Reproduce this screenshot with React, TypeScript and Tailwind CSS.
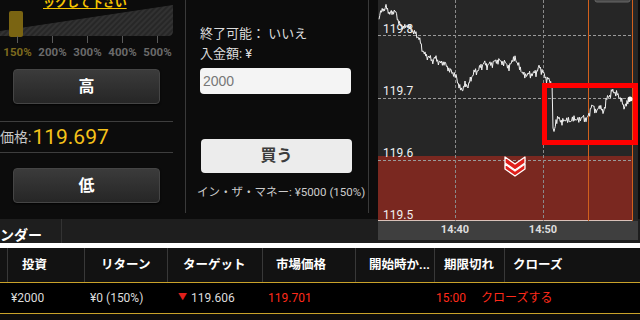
const keys: [number, number][] = [
  [379, 16], [383, 9], [386, 7], [389, 12], [392, 13], [395, 10], [398, 20], [401, 26], [404, 27],
  [408, 25], [412, 30], [416, 34], [419, 38], [422, 48], [425, 55], [428, 56], [432, 60], [436, 58],
  [440, 63], [444, 62], [448, 68], [452, 72], [456, 76], [459, 86], [462, 90], [465, 84], [468, 86],
  [471, 78], [474, 72], [478, 70], [481, 66], [484, 63], [487, 65], [490, 64], [494, 62], [498, 60],
  [502, 62], [506, 63], [509, 68], [512, 60], [515, 58], [518, 64], [521, 70], [524, 75], [528, 74],
  [532, 74], [536, 72], [539, 67], [542, 70], [545, 77], [548, 79], [550, 81], [552, 83], [553, 128],
  [554, 133], [556, 120], [559, 118], [562, 122], [566, 119], [570, 121], [574, 118], [578, 120],
  [582, 117], [586, 119], [589, 115], [591, 106], [594, 107], [597, 112], [600, 104], [603, 114],
  [606, 100], [609, 96], [612, 91], [615, 92], [618, 95], [621, 99], [624, 107], [627, 103], [630, 99],
];

// jagged tick line: interpolate the key points and shake them a little
function pricePath() {
  const pts: string[] = [];
  let i = 0;
  for (let k = 0; k < keys.length - 1; k++) {
    const [x0, y0] = keys[k];
    const [x1, y1] = keys[k + 1];
    const drop = Math.abs(y1 - y0) > 20;
    const steps = drop ? 1 : Math.max(1, Math.round((x1 - x0) / 0.8));
    for (let s = 0; s < steps; s++) {
      const t = s / steps;
      const x = x0 + (x1 - x0) * t;
      const base = y0 + (y1 - y0) * t;
      const n = drop ? 0 : Math.sin(i * 2.7) * 1.8 + Math.sin(i * 5.3 + 1) * 1.3 + (i % 7 === 0 ? 2.2 : 0);
      pts.push(`${(x - 378).toFixed(1)},${(base + n).toFixed(1)}`);
      i++;
    }
  }
  pts.push(`${630 - 378},99`);
  return "M" + pts.join(" L");
}

function Ramp() {
  const ticks = [17, 52, 87, 122, 157];
  return (
    <svg width="176" height="44" className="block">
      <defs>
        <pattern id="hatch" width="4" height="4" patternUnits="userSpaceOnUse" patternTransform="rotate(45)">
          <rect width="4" height="4" fill="#272727" />
          <rect width="2" height="4" fill="#323232" />
        </pattern>
      </defs>
      <path d="M0 31 L173 5 L173 31 Q173 36 168 36 L0 36 Z" fill="url(#hatch)" />
      <rect x="9" y="11" width="14" height="26" rx="2" fill="#7a6412" />
      {ticks.map((x) => (
        <line key={x} x1={x + 0.5} x2={x + 0.5} y1="36" y2="43" stroke="#5a5a5a" />
      ))}
    </svg>
  );
}

function DarkButton({ label }: { label: string }) {
  return (
    <div className="ml-[13px] w-[147px] h-[35px] rounded-[4px] border border-[#454545] bg-gradient-to-b from-[#3b3b3b] to-[#262626] flex items-center justify-center text-[16px] font-bold text-white shadow-[0_1px_2px_rgba(0,0,0,0.8)]">
      {label}
    </div>
  );
}

function LeftPanel() {
  const labels = ["150%", "200%", "300%", "400%", "500%"];
  return (
    <div className="w-[186px] h-[213px] border-r border-[#3a3a3a] flex flex-col">
      <div className="relative h-[44px]">
        <Ramp />
        <div className="absolute left-[43px] top-[-4px] text-[12px] leading-[14px] font-bold text-[#f5c400] underline underline-offset-[1px]">
          ックして下さい
        </div>
      </div>
      <div className="flex w-[175px] h-[14px] mt-[1px] text-[11.5px] leading-[14px] font-bold">
        {labels.map((l, i) => (
          <div key={l} className={`w-[35px] text-center ${i === 0 ? "text-[#7d6a1e]" : "text-[#6a6a6a]"}`}>
            {l}
          </div>
        ))}
      </div>
      <div className="mt-[10px]">
        <DarkButton label="高" />
      </div>
      <div className="mt-[17px] w-[173px] border-t border-[#3e3e3e]" />
      <div className="h-[30px] w-[173px] flex items-center">
        <span className="text-[14px] text-[#c8c8c8]">価格:</span>
        <span className="text-[21px] text-[#f5c21a] leading-none ml-[1px]">119.697</span>
      </div>
      <div className="w-[173px] border-t border-[#3e3e3e]" />
      <div className="mt-[15px]">
        <DarkButton label="低" />
      </div>
    </div>
  );
}

function MiddlePanel() {
  return (
    <div className="w-[183px] h-[213px] border-r border-[#3a3a3a] pl-[14px] pt-[24px] flex flex-col">
      <div className="text-[13px] leading-[20px] text-[#dcdcdc]">終了可能： いいえ</div>
      <div className="text-[13px] leading-[20px] text-[#dcdcdc]">入金額: ¥</div>
      <div className="mt-[4px] w-[151px] h-[26px] rounded-[4px] bg-[#f4f4f4] pl-[3px] flex items-center text-[14px] text-[#777] font-['Liberation_Sans',sans-serif]">
        2000
      </div>
      <div className="mt-[45px] ml-[1px] w-[151px] h-[34px] rounded-[4px] bg-[#ececec] flex items-center justify-center text-[16px] font-bold text-[#3c3c3c]">
        買う
      </div>
      <div className="mt-[12px] -ml-[3px] text-[11.5px] leading-[14px] text-[#cccccc] whitespace-nowrap">
        イン・ザ・マネー: ¥5000 (150%)
      </div>
    </div>
  );
}

function Chart() {
  const grid = [35, 98, 160];
  const yLabels: [string, number][] = [["119.8", 33], ["119.7", 95], ["119.6", 157], ["119.5", 219]];
  return (
    <div className="w-[260px] flex flex-col">
      <svg width="260" height="221" className="block bg-[#262626]">
        <rect x="0" y="156" width="255" height="65" fill="#7a2820" />
        {grid.map((y) => (
          <line key={y} x1="0" x2="255" y1={y + 0.5} y2={y + 0.5} stroke="#9a9a9a" strokeDasharray="3 2" />
        ))}
        <line x1="0" x2="255" y1="220.5" y2="220.5" stroke="#d8c0b8" />
        {[77, 165].map((x) => (
          <line key={x} x1={x + 0.5} x2={x + 0.5} y1="0" y2="221" stroke="#8a8a8a" strokeDasharray="3 2" />
        ))}
        <line x1="210.5" x2="210.5" y1="0" y2="221" stroke="#d2601c" />
        <line x1="254.5" x2="254.5" y1="0" y2="221" stroke="#d2601c" />
        <rect x="217" y="-4" width="35" height="6" rx="2" fill="#4a4a4a" stroke="#666" />
        {yLabels.map(([t, y]) => (
          <text key={t} x="5" y={y} fontSize="12" fill="#f0f0f0" fontFamily="Roboto, sans-serif">
            {t}
          </text>
        ))}
        <path d={pricePath()} fill="none" stroke="#f2f2f2" strokeWidth="1" strokeLinejoin="round" />
        <circle cx="252" cy="99" r="2.5" fill="#ffffff" />
        <rect x="166.5" y="85.5" width="91" height="57" fill="none" stroke="#ff0000" strokeWidth="5" />
        <g transform="translate(127 157)">
          <path d="M0 0 L10 7 L20 0 L20 6 L10 13 L0 6 Z" fill="#e0201c" stroke="#ffffff" strokeWidth="1.3" strokeLinejoin="round" />
          <path d="M0 7 L10 14 L20 7 L20 12 L10 19 L0 12 Z" fill="#e0201c" stroke="#ffffff" strokeWidth="1.3" strokeLinejoin="round" />
        </g>
      </svg>
      <div className="h-[19px] bg-[#3f3f3f] flex items-center text-[11px] font-bold text-[#dddddd]">
        <div className="ml-[57px] w-[40px] text-center">14:40</div>
        <div className="ml-[48px] w-[40px] text-center">14:50</div>
      </div>
      <div className="flex-1 bg-[#1f1f1f]" />
    </div>
  );
}

const headCols = [
  { w: "w-[7px]", pl: "pl-0", label: "" },
  { w: "w-[77px]", pl: "pl-[14px]", label: "投資" },
  { w: "w-[83px]", pl: "pl-[16px]", label: "リターン" },
  { w: "w-[95px]", pl: "pl-[15px]", label: "ターゲット" },
  { w: "w-[93px]", pl: "pl-[13px]", label: "市場価格" },
  { w: "w-[79px]", pl: "pl-[13px]", label: "開始時か..." },
  { w: "w-[70px]", pl: "pl-[9px]", label: "期限切れ" },
  { w: "flex-1", pl: "pl-[8px]", label: "クローズ" },
];

export default function App() {
  return (
    <div className="w-[640px] h-[320px] overflow-hidden bg-[#0c0c0c] text-white font-['Roboto','Noto_Sans_CJK_JP',sans-serif]">
      <div className="flex h-[243px]">
        <div className="w-[378px] flex flex-col">
          <div className="flex h-[213px]">
            <LeftPanel />
            <MiddlePanel />
            <div className="w-[9px]" />
          </div>
          <div className="h-[6px]" />
          <div className="h-[24px] bg-[#1e1e1e] flex">
            <div className="w-[62px] border-r border-[#333] pt-[8px] text-[14px] leading-[16px] font-bold text-white whitespace-nowrap overflow-hidden">
              ンダー
            </div>
          </div>
        </div>
        <Chart />
        <div className="w-[2px] flex flex-col">
          <div className="h-[219px]" />
          <div className="flex-1 bg-[#1e1e1e]" />
        </div>
      </div>
      <div className="h-[5px] bg-white" />
      <div className="h-[34px] bg-[#121212] flex">
        {headCols.map((c, i) => (
          <div
            key={i}
            className={`${c.w} ${c.pl} ${i > 0 ? "border-l border-[#383838]" : ""} flex items-center text-[12.5px] font-bold text-white whitespace-nowrap`}
          >
            {c.label}
          </div>
        ))}
      </div>
      <div className="h-[1px] bg-[#c9a22a]" />
      <div className="h-[30px] bg-black flex items-center text-[12px] text-[#dcdcdc] whitespace-nowrap">
        <div className="w-[90px] pl-[11px]">¥2000</div>
        <div className="w-[88px]">¥0 (150%)</div>
        <div className="w-[90px] flex items-center">
          <span className="text-[#e0201c] text-[9px] mr-[4px]">▼</span>
          <span>119.606</span>
        </div>
        <div className="w-[168px] text-[#ff2a1a]">119.701</div>
        <div className="w-[45px] text-[#ff2a1a]">15:00</div>
        <div className="text-[#ff2a1a]">クローズする</div>
      </div>
      <div className="h-[1px] bg-[#c9a22a]" />
    </div>
  );
}
